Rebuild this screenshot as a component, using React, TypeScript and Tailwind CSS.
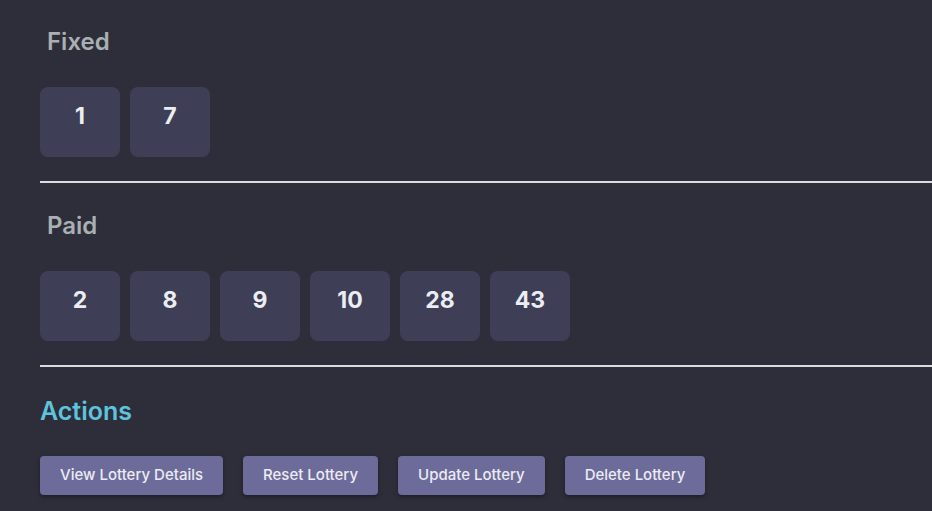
import React from "react";

const Box = ({ n }: { n: number }) => (
  <div className="flex h-[70px] w-[80px] items-center justify-center rounded-lg bg-[#3e3f56] pb-[11px] text-[23px] font-bold text-[#ecedf2]">
    {n}
  </div>
);

const Btn = ({ label }: { label: string }) => (
  <button className="h-[39px] rounded bg-[#6c6b9a] px-5 text-[15px] font-medium text-[#ecebf3] shadow-[0_2px_4px_rgba(0,0,0,0.35)]">
    {label}
  </button>
);

export default function App() {
  return (
    <div
      className="min-h-[511px] w-full overflow-hidden bg-[#2e2d3a] pl-10"
      style={{ fontFamily: "Inter, 'Noto Sans', sans-serif" }}
    >
      <div className="pt-[27px]">
        <h2 className="pl-[7px] text-[24px] font-semibold leading-[30px] text-[#a8b0b2]">Fixed</h2>
        <div className="mt-[30px] flex gap-[10px]">
          <Box n={1} />
          <Box n={7} />
        </div>
      </div>
      <div className="mt-[24px] h-[2px] bg-[#dcdcdc]" />
      <div className="pt-[28px]">
        <h2 className="pl-[7px] text-[24px] font-semibold leading-[30px] text-[#a8b0b2]">Paid</h2>
        <div className="mt-[30px] flex gap-[10px]">
          {[2, 8, 9, 10, 28, 43].map((n) => (
            <Box key={n} n={n} />
          ))}
        </div>
      </div>
      <div className="mt-[24px] h-[2px] bg-[#dcdcdc]" />
      <div className="pt-[29px]">
        <h2 className="text-[25px] font-semibold leading-[30px] text-[#5ec3dc]">Actions</h2>
        <div className="mt-[30px] flex gap-5">
          <Btn label="View Lottery Details" />
          <Btn label="Reset Lottery" />
          <Btn label="Update Lottery" />
          <Btn label="Delete Lottery" />
        </div>
      </div>
    </div>
  );
}
